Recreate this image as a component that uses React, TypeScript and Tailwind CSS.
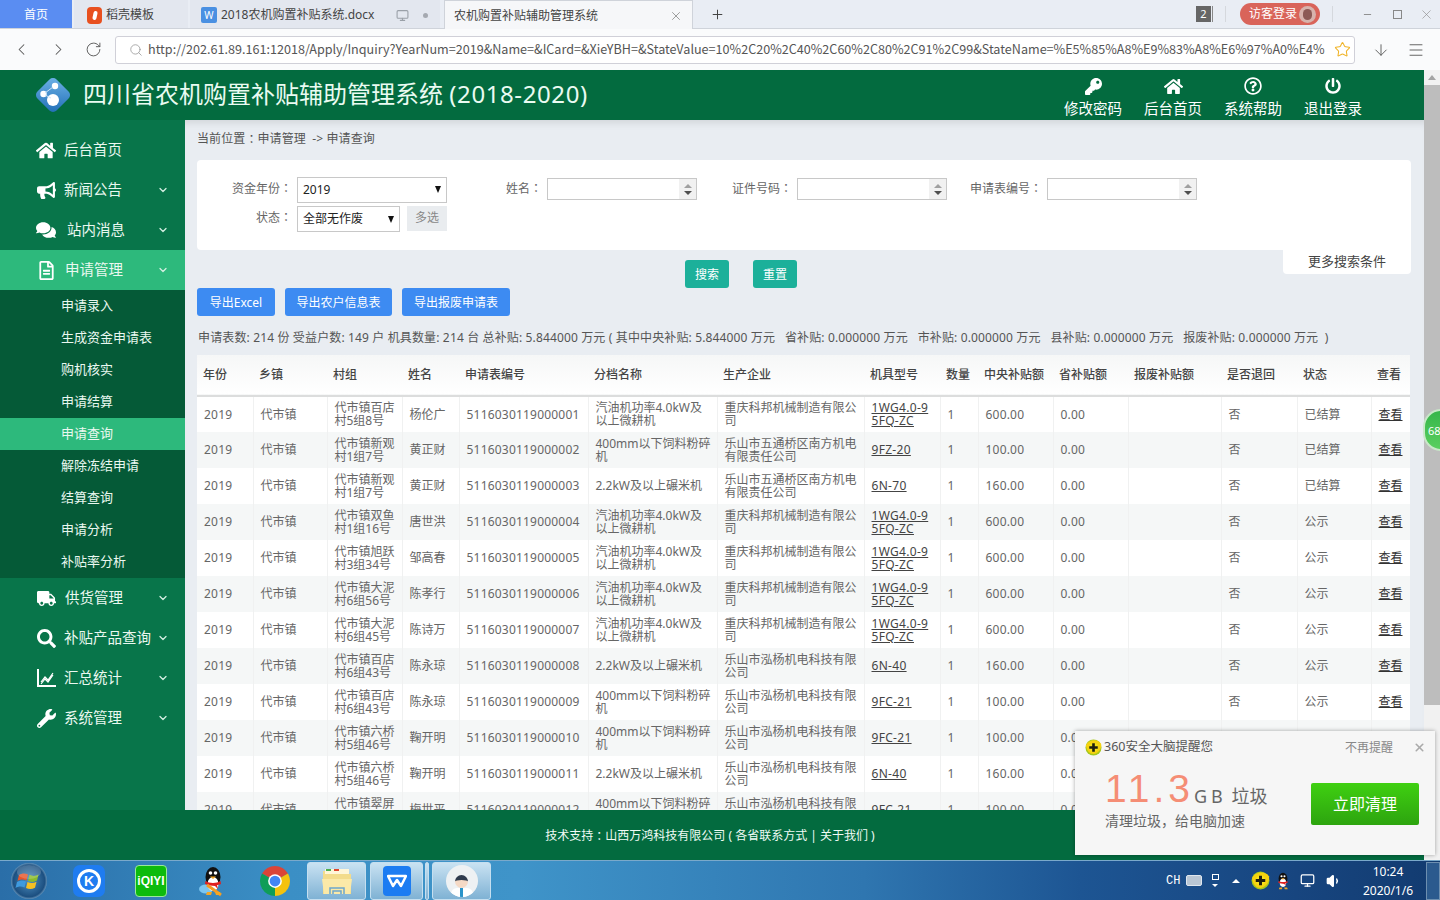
import React from 'react';
import { FaHome, FaBullhorn, FaComments, FaRegFileAlt, FaTruck, FaSearch, FaWrench, FaKey, FaRegQuestionCircle, FaPowerOff } from 'react-icons/fa';
import { ChevronDown, ChevronLeft, ChevronRight, RotateCw, Search, Star, ArrowDown, Menu, Plus, X, Minus, Monitor, Volume1 } from 'lucide-react';

const Colon = () => <span className="font-['Noto_Sans_CJK_TC',sans-serif]">：</span>;

const W40 = '汽油机功率4.0kW及\n以上微耕机';
const F400 = '400mm以下饲料粉碎\n机';
const R22 = '2.2kW及以上碾米机';
const KB = '重庆科邦机械制造有限公\n司';
const WT = '乐山市五通桥区南方机电\n有限责任公司';
const HY = '乐山市泓杨机电科技有限\n公司';
const M1 = '1WG4.0-9\n5FQ-ZC';

const rows = [
  ['代市镇百店\n村5组8号', '杨伦广', '001', W40, KB, M1, '600.00', '已结算'],
  ['代市镇新观\n村1组7号', '黄正财', '002', F400, WT, '9FZ-20', '100.00', '已结算'],
  ['代市镇新观\n村1组7号', '黄正财', '003', R22, WT, '6N-70', '160.00', '已结算'],
  ['代市镇双鱼\n村1组16号', '唐世洪', '004', W40, KB, M1, '600.00', '公示'],
  ['代市镇旭跃\n村3组34号', '邹高春', '005', W40, KB, M1, '600.00', '公示'],
  ['代市镇大泥\n村6组56号', '陈孝行', '006', W40, KB, M1, '600.00', '公示'],
  ['代市镇大泥\n村6组45号', '陈诗万', '007', W40, KB, M1, '600.00', '公示'],
  ['代市镇百店\n村6组43号', '陈永琼', '008', R22, HY, '6N-40', '160.00', '公示'],
  ['代市镇百店\n村6组43号', '陈永琼', '009', F400, HY, '9FC-21', '100.00', '公示'],
  ['代市镇六桥\n村5组46号', '鞠开明', '010', F400, HY, '9FC-21', '100.00', '公示'],
  ['代市镇六桥\n村5组46号', '鞠开明', '011', R22, HY, '6N-40', '160.00', '公示'],
  ['代市镇翠屏\n村5组46号', '梅世平', '012', F400, HY, '9FC-21', '100.00', '公示'],
];

const cols = [56, 74, 75, 57, 129, 129, 147, 76, 38, 75, 75, 93, 76, 74, 39];
const heads = ['年份', '乡镇', '村组', '姓名', '申请表编号', '分档名称', '生产企业', '机具型号', '数量', '中央补贴额', '省补贴额', '报废补贴额', '是否退回', '状态', '查看'];

function Td({ children, className = '' }: { children?: React.ReactNode; className?: string }) {
  return <td className={`border-l border-[#f0f1f1] first:border-l-0 pl-[7px] pr-0 pb-[1px] align-middle leading-[13px] whitespace-pre overflow-hidden ${className}`}>{children}</td>;
}

function Spin() {
  return (
    <div className="ml-auto w-[17px] h-full bg-[#f1f1f1] flex flex-col items-center justify-center gap-[3px]">
      <div className="w-0 h-0 border-x-[4px] border-x-transparent border-b-[4px] border-b-[#a0a0a0]" />
      <div className="w-0 h-0 border-x-[4px] border-x-transparent border-t-[4px] border-t-[#505050]" />
    </div>
  );
}

function InputField({ label }: { label: string }) {
  return (
    <>
      <div className="w-[95px] text-right mr-[5px] pb-[3px] text-[#666] whitespace-nowrap">{label}<Colon /></div>
      <div className="w-[150px] h-[22px] mb-[1px] border border-[#c8c8c8] bg-white flex"><Spin /></div>
    </>
  );
}

function Arrow() {
  return <span className="ml-auto w-0 h-0 border-x-[3.5px] border-x-transparent border-t-[7px] border-t-[#111]" />;
}

function SideItem({ icon, label, chevron = true, active = false, labelClass = 'ml-[8px]' }: { icon: React.ReactNode; label: string; chevron?: boolean; active?: boolean; labelClass?: string }) {
  return (
    <div className={`h-[40px] flex items-center pl-[36px] pr-[16px] text-[#eaf8f0] text-[14.5px] ${active ? 'bg-[#2db97c]' : ''}`}>
      <span className="w-[20px] h-[20px] flex items-center justify-center text-white">{icon}</span>
      <span className={`pb-[3px] font-['Noto_Sans_CJK_SC',sans-serif] ${labelClass}`}>{label}</span>
      {chevron && <ChevronDown className="ml-auto text-[#d5efe2]" size={12} strokeWidth={2.5} />}
    </div>
  );
}

function HeadBtn({ icon, label }: { icon: React.ReactNode; label: string }) {
  return (
    <div className="w-[80px] flex flex-col items-center text-white text-[14.5px] leading-[18px]">
      <span className="h-[20px] flex items-center mt-[6px] mb-[3px]">{icon}</span>
      <span className="whitespace-nowrap font-['Noto_Sans_CJK_SC',sans-serif]">{label}</span>
    </div>
  );
}

function Logo() {
  return (
    <svg width="38" height="38" viewBox="0 0 38 38">
      <defs>
        <linearGradient id="lg1" x1="0" y1="0" x2="1" y2="1">
          <stop offset="0" stopColor="#6fb3e8" />
          <stop offset="1" stopColor="#1f6db5" />
        </linearGradient>
      </defs>
      <rect x="5.500" y="5.500" width="27" height="27" rx="5" transform="rotate(45 19 19)" fill="url(#lg1)" />
      <circle cx="21" cy="10" r="3.200" fill="#fff" />
      <circle cx="9.500" cy="18" r="3.200" fill="#fff" />
      <circle cx="19" cy="24" r="6" fill="#fff" />
      <path d="M11 17L19 11M11 19L17 22" stroke="#cfe6f7" strokeWidth="1" />
    </svg>
  );
}

function Orb() {
  return (
    <svg width="38" height="38" viewBox="0 0 38 38">
      <defs>
        <radialGradient id="orb" cx="0.5" cy="0.5" r="0.55">
          <stop offset="0" stopColor="#4f8fc0" />
          <stop offset="0.8" stopColor="#1c4f80" />
          <stop offset="1" stopColor="#9cc4e0" />
        </radialGradient>
      </defs>
      <circle cx="19" cy="19" r="18" fill="url(#orb)" />
      <path d="M9 13c3-2 6-2 9-.5l-1.500 6c-3-1.500-6-1.500-9 .5z" fill="#e8562a" />
      <path d="M19.500 12.800c3 1.500 6 1.500 9-.3l-1.500 6c-3 1.800-6 1.800-9 .3z" fill="#8bbb2c" />
      <path d="M7 20c3-2 6-2 9-.5l-1.500 6c-3-1.500-6-1.500-9 .5z" fill="#3f9adf" />
      <path d="M17.500 20c3 1.500 6 1.500 9-.3l-1.500 6c-3 1.800-6 1.800-9 .3z" fill="#f7c023" />
      <ellipse cx="19" cy="10" rx="12" ry="7" fill="#fff" opacity="0.18" />
    </svg>
  );
}

function Chrome() {
  return (
    <svg width="30" height="30" viewBox="0 0 24 24">
      <path d="M12 12L1.610 6A12 12 0 0 1 22.390 6Z" fill="#db4437" />
      <path d="M12 12L22.390 6A12 12 0 0 1 12 24Z" fill="#f4c20d" />
      <path d="M12 12L12 24A12 12 0 0 1 1.610 6Z" fill="#0f9d58" />
      <circle cx="12" cy="12" r="5.500" fill="#fff" />
      <circle cx="12" cy="12" r="4.300" fill="#4285f4" />
    </svg>
  );
}

function Penguin({ size = 34, wing = true }: { size?: number; wing?: boolean }) {
  return (
    <svg width={size} height={size} viewBox="0 0 34 34">
      {wing && <ellipse cx="10" cy="25" rx="7" ry="4.500" fill="#7cc6f0" />}
      <ellipse cx="17" cy="13" rx="7.500" ry="10" fill="#111" />
      <ellipse cx="17" cy="20" rx="5.500" ry="7" fill="#fff" />
      <circle cx="14.500" cy="9" r="1.800" fill="#fff" />
      <circle cx="19.500" cy="9" r="1.800" fill="#fff" />
      <path d="M14 12.500h6l-3 2.500z" fill="#f5a623" />
      <path d="M9.500 17c4 2.500 11 2.500 15 0l.5 3c-2 .8-3 1-4 1l1 4-3-3c-3 0-7-.8-10-2z" fill="#e02020" />
      {wing && <path d="M11 21L25 31" stroke="#f59a23" strokeWidth="3" />}
      <path d="M11 28h5l-1 3h-5zM19 28h5l1 3h-5z" fill="#f5a623" />
    </svg>
  );
}

function Icon360({ size = 18 }: { size?: number }) {
  return (
    <svg width={size} height={size} viewBox="0 0 18 18">
      <circle cx="9" cy="9" r="8.500" fill="#a5c81d" />
      <path d="M1 7c2-6 12-8 16-2 1 4-2 10-8 11-4 0-7-3-8-9z" fill="#f6d20f" />
      <circle cx="9" cy="9" r="4.800" fill="#f6e21a" />
      <path d="M7.600 4.500h2.800v3.100h3.100v2.800h-3.100v3.100H7.600v-3.100H4.500V7.600h3.100z" fill="#1f1f10" />
    </svg>
  );
}

function TaskBtn({ children, w }: { children?: React.ReactNode; w: string }) {
  return <div className={`${w} h-[38px] mt-[1px] rounded-[3px] border border-[#c5dff0] bg-gradient-to-b from-[#c9e2f2] to-[#7fb2d4] flex items-center justify-center`}>{children}</div>;
}

export default function App() {
  return (
    <div className="w-[1440px] h-[900px] relative overflow-hidden flex flex-col font-['Noto_Sans','Noto_Sans_CJK_SC',sans-serif] text-[12px] bg-white">
      {/* tab strip */}
      <div className="h-[29px] shrink-0 flex bg-[#e9edf4] border-b border-[#cfd3da] text-[12px] text-[#444]">
        <div className="w-[72px] bg-[#5a8df2] text-white flex items-center justify-center pt-[2px]">首页</div>
        <div className="w-[2px]" />
        <div className="w-[114px] bg-[#e3e7ef] flex items-center pl-[13px] pt-[2px]">
          <span className="w-[15px] h-[17px] rounded-[4px] bg-[#e8501f] flex items-center justify-center mr-[4px]">
            <span className="w-[4px] h-[9px] rounded-full bg-white rotate-12" />
          </span>
          稻壳模板
        </div>
        <div className="w-[2px]" />
        <div className="w-[250px] bg-[#e3e7ef] flex items-center pl-[11px] pt-[2px]">
          <span className="w-[16px] h-[16px] rounded-[2px] bg-[#4a90e2] text-white text-[10px] leading-[16px] text-center mr-[4px]">W</span>
          <span className="whitespace-nowrap">2018农机购置补贴系统.docx</span>
          <Monitor className="ml-[22px] text-[#9aa0a8]" size={13} />
          <span className="w-[5px] h-[5px] rounded-full bg-[#a5a9b0] ml-[14px]" />
        </div>
        <div className="w-[4px]" />
        <div className="w-[249px] h-[29px] bg-[#f6f7f9] border border-b-0 border-[#cfd3da] flex items-center pl-[9px] pr-[9px] pt-[2px]">
          <span>农机购置补贴辅助管理系统</span>
          <X className="ml-auto text-[#777]" size={14} strokeWidth={1.2} />
        </div>
        <Plus className="ml-[17px] self-center text-[#444]" size={15} strokeWidth={1.6} />
        <div className="ml-auto flex items-center">
          <span className="w-[15px] h-[16px] bg-[#666] text-white text-[11px] leading-[16px] text-center">2</span>
          <span className="w-[1px] h-[16px] bg-[#888] ml-[1px]" />
          <span className="w-[1px] h-[16px] bg-[#d5d8dd] ml-[12px]" />
          <div className="ml-[14px] w-[80px] h-[22px] rounded-full bg-[#d9645a] text-white text-[12px] flex items-center pl-[9px]">
            访客登录
            <span className="ml-[2px] w-[17px] h-[17px] rounded-full bg-[#d7b3ac] flex items-center justify-center">
              <span className="w-[9px] h-[11px] rounded-full bg-[#8c5a55]" />
            </span>
          </div>
          <span className="w-[1px] h-[16px] bg-[#d5d8dd] ml-[12px]" />
          <Minus className="ml-[29px] text-[#888]" size={11} />
          <span className="ml-[20px] w-[9px] h-[9px] border border-[#888]" />
          <X className="ml-[17px] mr-[6px] text-[#888]" size={15} strokeWidth={1} />
        </div>
      </div>

      {/* address bar */}
      <div className="h-[41px] shrink-0 flex items-center bg-[#fafbfc]">
        <ChevronLeft className="ml-[12px] text-[#555]" size={19} strokeWidth={1.3} />
        <ChevronRight className="ml-[18px] text-[#555]" size={19} strokeWidth={1.3} />
        <RotateCw className="ml-[17px] text-[#555]" size={17} strokeWidth={1.3} />
        <div className="ml-[13px] w-[1240px] h-[28px] border border-[#d0d0d8] rounded-[3px] bg-white flex items-center pl-[13px] pr-[3px]">
          <Search className="text-[#9a9a9a] shrink-0" size={14} strokeWidth={1.4} />
          <span className="ml-[5px] overflow-hidden whitespace-nowrap text-[#555] text-[12.6px] w-[1180px] font-['Noto_Sans_CJK_SC',sans-serif]">http://202.61.89.161:12018/Apply/Inquiry?YearNum=2019&amp;Name=&amp;ICard=&amp;XieYBH=&amp;StateValue=10%2C20%2C40%2C60%2C80%2C91%2C99&amp;StateName=%E5%85%A8%E9%83%A8%E6%97%A0%E4%</span>
          <Star className="ml-auto text-[#f0b429] shrink-0" size={17} strokeWidth={1.5} />
        </div>
        <ArrowDown className="ml-[17px] text-[#555]" size={18} strokeWidth={1.2} />
        <Menu className="ml-[17px] text-[#555]" size={18} strokeWidth={1.2} />
      </div>

      {/* page + scrollbar */}
      <div className="flex-1 min-h-0 flex">
        <div className="w-[1424px] flex flex-col">
          {/* header */}
          <div className="h-[50px] shrink-0 bg-[#036b3f] flex items-center pl-[34px] pr-[51px] text-white">
            <Logo />
            <span className="ml-[11px] pb-[3px] text-[24px] leading-[30px] text-[#eafbf2] whitespace-nowrap">四川省农机购置补贴辅助管理系统 <span className="tracking-[0.6px]">(2018-2020)</span></span>
            <div className="ml-auto flex h-full items-start">
              <HeadBtn icon={<FaKey size={17} />} label="修改密码" />
              <HeadBtn icon={<FaHome size={19} />} label="后台首页" />
              <HeadBtn icon={<FaRegQuestionCircle size={18} />} label="系统帮助" />
              <HeadBtn icon={<FaPowerOff size={16} />} label="退出登录" />
            </div>
          </div>

          <div className="flex-1 min-h-0 flex">
            {/* sidebar */}
            <div className="w-[185px] shrink-0 bg-[#08754a] pt-[10px]">
              <SideItem icon={<FaHome size={21} />} label="后台首页" chevron={false} />
              <SideItem icon={<FaBullhorn size={19} />} label="新闻公告" />
              <SideItem icon={<FaComments size={22} />} label="站内消息" labelClass="ml-[11px]" />
              <SideItem icon={<FaRegFileAlt size={19} />} label="申请管理" active labelClass="ml-[9px]" />
              <div className="bg-[#055a37] text-[13px] text-[#eaf8f0]">
                {['申请录入', '生成资金申请表', '购机核实', '申请结算', '申请查询', '解除冻结申请', '结算查询', '申请分析', '补贴率分析'].map((s) => (
                  <div key={s} className={`h-[32px] flex items-center pl-[61px] ${s === '申请查询' ? 'bg-[#2db97c]' : ''}`}>{s}</div>
                ))}
              </div>
              <SideItem icon={<FaTruck size={19} />} label="供货管理" labelClass="ml-[9px]" />
              <SideItem icon={<FaSearch size={19} />} label="补贴产品查询" />
              <SideItem
                icon={
                  <svg width="20" height="20" viewBox="0 0 20 20" fill="none" stroke="#fff">
                    <path d="M2 1v17h18" strokeWidth="2" />
                    <path d="M5 14l4-5 3 3 5-7M5 16l4-5 3 3 5-7" strokeWidth="1.200" />
                  </svg>
                }
                label="汇总统计"
              />
              <SideItem icon={<FaWrench size={19} />} label="系统管理" />
            </div>

            {/* content */}
            <div className="flex-1 min-w-0 bg-[#e9edf2] shadow-[inset_0_8px_8px_-6px_rgba(0,0,0,0.12)] pl-[12px] pr-[13px] overflow-hidden">
              <div className="h-[40px] flex items-center pb-[2px] text-[12px] tracking-[0.1px] text-[#555] whitespace-pre">当前位置<Colon />申请管理  -&gt; 申请查询</div>
              <div className="h-[90px] bg-white rounded-t-[4px] rounded-bl-[4px] pt-[17px]">
                <div className="flex items-center h-[25px]">
                  <div className="w-[95px] text-right mr-[5px] pb-[3px] text-[#666] whitespace-nowrap">资金年份<Colon /></div>
                  <div className="w-[150px] h-[26px] border border-[#c8c8c8] flex items-center px-[5px] text-[#222]">2019<Arrow /></div>
                  <InputField label="姓名" />
                  <InputField label="证件号码" />
                  <InputField label="申请表编号" />
                </div>
                <div className="flex items-center h-[26px] mt-[4px]">
                  <div className="w-[95px] text-right mr-[5px] pb-[4px] text-[#666] whitespace-nowrap">状态<Colon /></div>
                  <div className="w-[103px] h-[26px] border border-[#c8c8c8] flex items-center px-[5px] text-[#222] whitespace-nowrap">全部无作废<Arrow /></div>
                  <div className="ml-[7px] w-[40px] h-[25px] mb-[2px] bg-[#e9ecef] text-[#888] flex items-center justify-center">多选</div>
                </div>
              </div>
              <div className="h-[38px] flex items-start">
                <div className="mt-[10px] ml-[488px] w-[44px] h-[28px] rounded-[3px] bg-[#1cb09a] text-white flex items-center justify-center pt-[2px]">搜索</div>
                <div className="mt-[10px] ml-[24px] w-[44px] h-[28px] rounded-[3px] bg-[#1cb09a] text-white flex items-center justify-center pt-[2px]">重置</div>
                <div className="ml-auto w-[128px] h-[24px] bg-white rounded-b-[4px] flex items-center justify-center text-[13px] text-[#444]">更多搜索条件</div>
              </div>
              <div className="flex gap-[10px] h-[28px] text-white">
                <div className="w-[78px] rounded-[3px] bg-[#3d8bf2] flex items-center justify-center pt-[2px]">导出Excel</div>
                <div className="w-[107px] rounded-[3px] bg-[#3d8bf2] flex items-center justify-center pt-[2px]">导出农户信息表</div>
                <div className="w-[108px] rounded-[3px] bg-[#3d8bf2] flex items-center justify-center pt-[2px]">导出报废申请表</div>
              </div>
              <div className="h-[39px] flex items-center pt-[5px] pl-[1px] text-[12px] tracking-[0.14px] text-[#555] whitespace-pre">申请表数: 214 份 受益户数: 149 户 机具数量: 214 台 总补贴: 5.844000 万元 ( 其中中央补贴: 5.844000 万元   省补贴: 0.000000 万元   市补贴: 0.000000 万元   县补贴: 0.000000 万元   报废补贴: 0.000000 万元  )</div>
              <table className="w-[1213px] table-fixed border-collapse text-[12px] text-[#666]">
                <colgroup>
                  {cols.map((c, i) => <col key={i} style={{ width: c }} />)}
                </colgroup>
                <thead>
                  <tr className="h-[41px] bg-gradient-to-b from-[#f6f7f7] to-white border-b-2 border-[#dcdddd] text-[#444]">
                    {heads.map((h) => <th key={h} className="text-left font-medium pl-[6px] pr-0 pb-[1px] whitespace-nowrap">{h}</th>)}
                  </tr>
                </thead>
                <tbody>
                  {rows.map((r, i) => (
                    <tr key={i} className={`h-[36px] ${i % 2 ? 'bg-[#f5f7f7]' : 'bg-white'}`}>
                      <Td className="tracking-[0.2px]">2019</Td>
                      <Td>代市镇</Td>
                      <Td>{r[0]}</Td>
                      <Td>{r[1]}</Td>
                      <Td className="tracking-[0.2px]">{'5116030119000' + r[2]}</Td>
                      <Td>{r[3]}</Td>
                      <Td>{r[4]}</Td>
                      <Td className="underline text-[#444] tracking-[0.3px]">{r[5]}</Td>
                      <Td>1</Td>
                      <Td className="tracking-[0.2px]">{r[6]}</Td>
                      <Td className="tracking-[0.2px]">0.00</Td>
                      <Td />
                      <Td>否</Td>
                      <Td>{r[7]}</Td>
                      <Td className="underline text-[#333]">查看</Td>
                    </tr>
                  ))}
                </tbody>
              </table>
            </div>
          </div>

          {/* footer */}
          <div className="h-[50px] shrink-0 bg-[#036b3f] text-[#f0fbf5] text-[12px] flex items-center justify-center pr-[4px] pt-[1px] whitespace-pre">
            技术支持<Colon />山西万鸿科技有限公司 ( 各省联系方式 | 关于我们 )
          </div>
        </div>

        {/* page scrollbar */}
        <div className="w-[16px] bg-[#f1f1f1] flex flex-col items-center">
          <div className="h-[15px] flex items-center">
            <div className="w-0 h-0 border-x-[4px] border-x-transparent border-b-[5px] border-b-[#a3a3a3]" />
          </div>
          <div className="w-full h-[620px] bg-[#bdbdbd]" />
        </div>
      </div>

      {/* taskbar */}
      <div className="h-[40px] shrink-0 flex items-center bg-[linear-gradient(90deg,#2a6ea8_0%,#3b8fc5_20%,#3f94c9_36%,#2f76b0_60%,#1d5593_75%,#17457f_90%,#123b70_100%)] border-t border-[#7aa9cb]">
        <div className="w-[58px] flex justify-center"><Orb /></div>
        <div className="w-[62px] flex justify-center">
          <span className="w-[32px] h-[32px] rounded-[7px] bg-[#1f7cf0] flex items-center justify-center">
            <span className="w-[24px] h-[24px] rounded-full border-[3px] border-white text-white text-[14px] leading-[18px] font-bold text-center font-['Liberation_Sans',sans-serif]">K</span>
          </span>
        </div>
        <div className="w-[62px] flex justify-center">
          <span className="w-[32px] h-[32px] rounded-[4px] bg-[#0dbb0d] text-white text-[12px] font-bold flex items-center justify-center font-['Liberation_Sans',sans-serif] border border-[#9be89b]">iQIYI</span>
        </div>
        <div className="w-[62px] flex justify-center"><Penguin /></div>
        <div className="w-[62px] flex justify-center"><Chrome /></div>
        <div className="ml-[1px]">
          <TaskBtn w="w-[59px]">
            <svg width="32" height="30" viewBox="0 0 32 30">
              <path d="M2 5h11l2 3h15v20H2z" fill="#f3dc8c" />
              <rect x="4" y="3" width="24" height="5" fill="#fff6d8" />
              <rect x="5" y="3" width="5" height="2" fill="#4caf50" />
              <rect x="13" y="3" width="5" height="2" fill="#e0452c" />
              <path d="M1 13h30l-2 15H3z" fill="#fbe9a8" />
              <path d="M9 28v-6h14v6M12 28v-3h8v3" fill="none" stroke="#6ea6cc" strokeWidth="1.500" />
            </svg>
          </TaskBtn>
        </div>
        <div className="ml-[4px]">
          <TaskBtn w="w-[53px]">
            <span className="w-[28px] h-[30px] rounded-[4px] bg-[#1c7cf2] flex items-center justify-center">
              <svg width="20" height="14" viewBox="0 0 20 14"><path d="M1 2h18l-5 10-4-6-4 6z" fill="none" stroke="#fff" strokeWidth="2.500" strokeLinejoin="round" /></svg>
            </span>
          </TaskBtn>
        </div>
        <div className="ml-[2px]"><TaskBtn w="w-[4px]" /></div>
        <div className="ml-[3px]">
          <TaskBtn w="w-[59px]">
            <span className="w-[32px] h-[32px] rounded-full bg-[#eef1f3] flex flex-col items-center justify-end overflow-hidden">
              <span className="w-[13px] h-[13px] rounded-full bg-[#f5d9c5] border-t-[5px] border-[#2e3a4d]" />
              <span className="w-[22px] h-[9px] rounded-t-[6px] bg-white flex justify-center"><span className="w-[3px] h-[9px] bg-[#2a93c9]" /></span>
            </span>
          </TaskBtn>
        </div>
        <div className="ml-auto flex items-center text-white">
          <span className="text-[12px] font-['Liberation_Mono',monospace] w-[16px]">CH</span>
          <span className="ml-[4px] w-[16px] h-[11px] rounded-[2px] bg-[#b9c6d4] border border-[#dfe6ee]" />
          <span className="ml-[9px] flex flex-col items-center w-[8px] gap-[4px]">
            <span className="w-[7px] h-[6px] border border-white" />
            <span className="w-0 h-0 border-x-[3px] border-x-transparent border-t-[3px] border-t-white" />
          </span>
          <span className="ml-[13px] w-0 h-0 border-x-[4px] border-x-transparent border-b-[4px] border-b-white" />
          <span className="ml-[11px] flex"><Icon360 size={19} /></span>
          <span className="ml-[3px] flex"><Penguin size={20} wing={false} /></span>
          <Monitor className="ml-[7px] text-white" size={15} />
          <Volume1 className="ml-[11px] text-white" size={16} fill="#fff" />
          <div className="ml-[14px] w-[64px] text-center text-[12px] leading-[19px]">
            <div>10:24</div>
            <div>2020/1/6</div>
          </div>
          <div className="ml-[6px] w-[14px] h-[38px] border border-[#6d8fb0] bg-[#2b5a8e]" />
        </div>
      </div>

      {/* 360 floating ball */}
      <div className="absolute left-[1423px] top-[409px] w-[36px] h-[42px] rounded-full border-[2px] border-[#c8e8c8] bg-gradient-to-b from-[#35b64a] to-[#59cf5f] text-white text-[11px] leading-[40px] pl-[3px]">68</div>

      {/* 360 popup */}
      <div className="absolute left-[1075px] top-[731px] w-[360px] h-[124px] bg-[#f6f6f6] shadow-[0_0_4px_rgba(0,0,0,0.35)] p-[8px_0_0_10px]">
        <div className="flex items-center h-[17px]">
          <Icon360 size={17} />
          <span className="ml-[2px] text-[#555] text-[12.5px]">360安全大脑提醒您</span>
          <span className="ml-auto text-[12px] text-[#888]">不再提醒</span>
          <X className="ml-[20px] mr-[9px] text-[#aaa]" size={13} strokeWidth={3} />
        </div>
        <div className="flex mt-[12px]">
          <div className="ml-[20px]">
            <div className="flex items-end h-[42px]">
              <span className="text-[39px] leading-[42px] font-light tracking-[4px] text-[#f58d75] font-['Liberation_Sans',sans-serif]">11.3</span>
              <span className="text-[18px] leading-[28px] text-[#666] whitespace-pre"><span className="tracking-[4px]">GB</span> 垃圾</span>
            </div>
            <div className="text-[14px] leading-[20px] mt-[1px] text-[#666]">清理垃圾，给电脑加速</div>
          </div>
          <div className="ml-auto mr-[16px] mt-[15px] w-[108px] h-[42px] rounded-[2px] bg-gradient-to-b from-[#3fd011] to-[#2da40f] text-white text-[16px] flex items-center justify-center">立即清理</div>
        </div>
      </div>
    </div>
  );
}
